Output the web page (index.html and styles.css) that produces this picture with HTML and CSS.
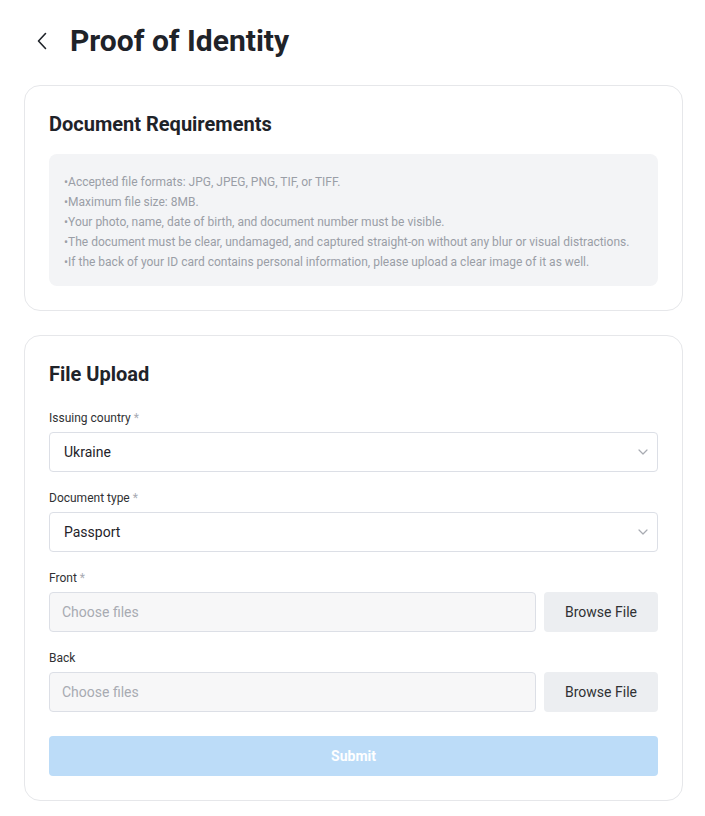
FILE: index.html
```html
<!DOCTYPE html>
<html lang="en">
<head>
<meta charset="utf-8">
<title>Proof of Identity</title>
<link rel="stylesheet" href="styles.css">
</head>
<body>
<div class="page">
  <header class="header">
    <button class="back" aria-label="Back">
      <svg width="12" height="18" viewBox="0 0 12 18"><path d="M9.5 1.5 L2.5 9 L9.5 16.5" fill="none" stroke="#1f2329" stroke-width="1.6" stroke-linecap="round" stroke-linejoin="round"/></svg>
    </button>
    <h1 class="title">Proof of Identity</h1>
  </header>

  <section class="card">
    <h2 class="card-title">Document Requirements</h2>
    <div class="reqs">
      <p>•Accepted file formats: JPG, JPEG, PNG, TIF, or TIFF.</p>
      <p>•Maximum file size: 8MB.</p>
      <p>•Your photo, name, date of birth, and document number must be visible.</p>
      <p>•The document must be clear, undamaged, and captured straight-on without any blur or visual distractions.</p>
      <p>•If the back of your ID card contains personal information, please upload a clear image of it as well.</p>
    </div>
  </section>

  <section class="card">
    <h2 class="card-title upload-title">File Upload</h2>
    <div class="field">
      <label class="label">Issuing country <span class="req">*</span></label>
      <div class="select"><span>Ukraine</span>
        <svg class="caret" width="10" height="6" viewBox="0 0 10 6"><path d="M1 1 L5 5 L9 1" fill="none" stroke="#a8abb2" stroke-width="1.2" stroke-linecap="round" stroke-linejoin="round"/></svg>
      </div>
    </div>
    <div class="field">
      <label class="label">Document type <span class="req">*</span></label>
      <div class="select"><span>Passport</span>
        <svg class="caret" width="10" height="6" viewBox="0 0 10 6"><path d="M1 1 L5 5 L9 1" fill="none" stroke="#a8abb2" stroke-width="1.2" stroke-linecap="round" stroke-linejoin="round"/></svg>
      </div>
    </div>
    <div class="field">
      <label class="label">Front <span class="req">*</span></label>
      <div class="file-row">
        <div class="file-input">Choose files</div>
        <button class="browse">Browse File</button>
      </div>
    </div>
    <div class="field">
      <label class="label">Back</label>
      <div class="file-row">
        <div class="file-input">Choose files</div>
        <button class="browse">Browse File</button>
      </div>
    </div>
    <button class="submit">Submit</button>
  </section>
</div>
</body>
</html>
```

FILE: styles.css
```css
* { box-sizing: border-box; }
html, body { margin: 0; padding: 0; background: #ffffff; }
body { font-family: Roboto, "Liberation Sans", Arial, sans-serif; color: #1f2329; }
.page { padding: 20px 22px 16px 24px; }
.header { display: flex; align-items: center; height: 42px; margin-bottom: 23px; }
.back { border: 0; background: none; padding: 0; margin: 0 21px 0 11px; width: 14px; height: 18px; display: flex; align-items: center; justify-content: center; cursor: pointer; }
.title { margin: 0; font-size: 30px; font-weight: 700; line-height: 42px; color: #1f2329; }
.card { border: 1px solid #e6e7ea; border-radius: 16px; padding: 24px; margin-bottom: 24px; }
.card-title { margin: 0 0 16px; font-size: 20px; font-weight: 700; line-height: 28px; color: #1f2329; }
.upload-title { margin-bottom: 20px; }
.reqs { background: #f3f4f6; border-radius: 8px; padding: 18px 15px 14px; }
.reqs p { margin: 0; font-size: 12px; line-height: 20px; color: #9a9ea6; }
.field { margin-bottom: 16px; }
.label { display: block; font-size: 12px; line-height: 20px; margin-bottom: 4px; color: #303133; }
.req { color: #a8abb2; }
.select { height: 40px; border: 1px solid #dcdfe6; border-radius: 4px; display: flex; align-items: center; justify-content: space-between; padding: 0 9px 0 14px; font-size: 14px; color: #1f2329; background: #fff; }
.caret { display: block; }
.file-row { display: flex; gap: 8px; }
.file-input { flex: 1; height: 40px; border: 1px solid #dcdfe6; border-radius: 4px; background: #f7f7f8; display: flex; align-items: center; padding: 0 12px; font-size: 14px; color: #a8abb2; }
.browse { width: 114px; height: 40px; border: 0; border-radius: 4px; background: #eceef1; font-family: inherit; font-size: 14px; color: #303133; padding: 0; }
.submit { display: block; width: 100%; height: 40px; border: 0; border-radius: 4px; background: #bcdcf8; color: #ffffff; font-family: inherit; font-weight: 700; font-size: 14px; margin-top: 24px; }
```
